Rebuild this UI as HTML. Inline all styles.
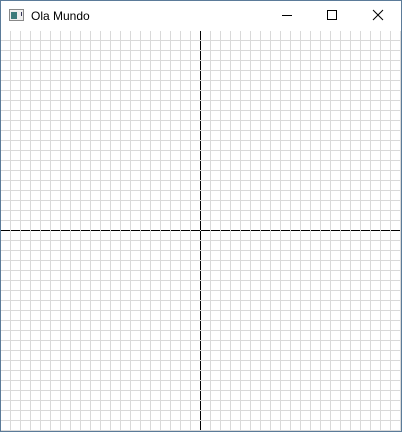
<!DOCTYPE html>
<html><head><style>
body{margin:0;width:402px;height:432px;overflow:hidden;background:#fff;position:relative;font-family:"Liberation Sans",sans-serif}
.win{position:absolute;left:0;top:0;width:400px;height:430px;border:1px solid #5b7b99;background:#fff}
.grid{position:absolute;left:1px;top:31px;width:400px;height:400px;
background-image:linear-gradient(to right,#d9d9d9 1px,transparent 1px),linear-gradient(to bottom,#d9d9d9 1px,transparent 1px);
background-size:10px 10px;background-position:-1px -1px}
.t{position:absolute;left:31px;top:9px;font-size:12px;color:#000}
</style></head><body>
<div class="win"></div>
<div class="grid"></div>
<div style="position:absolute;left:200px;top:31px;width:1px;height:400px;background:repeating-linear-gradient(to bottom,#000 0 9px,#d9d9d9 9px 10px)"></div>
<div style="position:absolute;left:1px;top:230px;width:400px;height:1px;background:repeating-linear-gradient(to right,#000 0 9px,#d9d9d9 9px 10px)"></div>
<svg style="position:absolute;left:9px;top:9px" width="15" height="13">
<rect x="0.5" y="0.5" width="14" height="11" fill="#eee" stroke="#888"/>
<rect x="2" y="3" width="6" height="7" fill="#3b7a7a"/>
<rect x="12" y="3" width="1" height="4" fill="#335"/>
</svg>
<div class="t">Ola Mundo</div>
<svg style="position:absolute;left:270px;top:0" width="132" height="31">
<line x1="12" y1="15.5" x2="22" y2="15.5" stroke="#000"/>
<rect x="57.5" y="10.5" width="9" height="9" fill="none" stroke="#000"/>
<path d="M103 10 L113 20 M113 10 L103 20" stroke="#000"/>
</svg>
</body></html>
